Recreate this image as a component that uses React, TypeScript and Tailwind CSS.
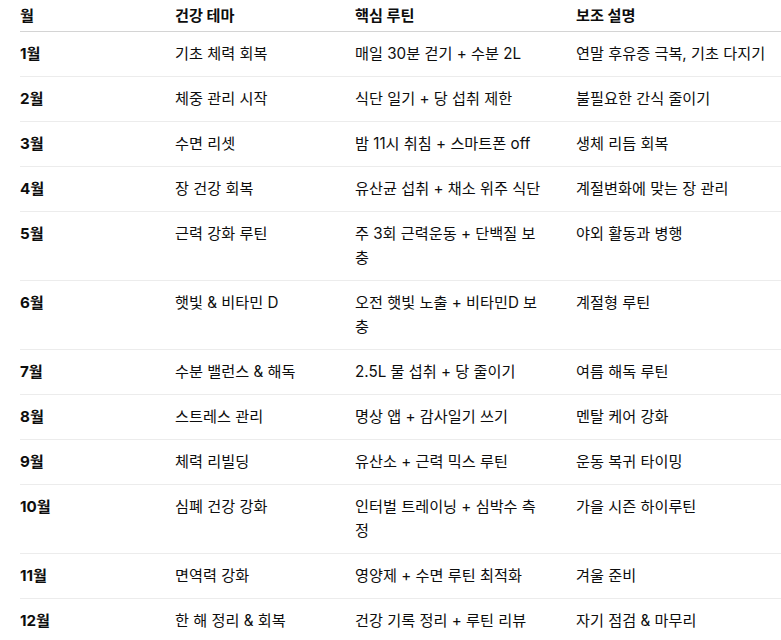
import React from 'react';

interface PlanRow {
  month: string;
  theme: string;
  routine: string;
  note: string;
}

const rows: PlanRow[] = [
  { month: '1월', theme: '기초 체력 회복', routine: '매일 30분 걷기 + 수분 2L', note: '연말 후유증 극복, 기초 다지기' },
  { month: '2월', theme: '체중 관리 시작', routine: '식단 일기 + 당 섭취 제한', note: '불필요한 간식 줄이기' },
  { month: '3월', theme: '수면 리셋', routine: '밤 11시 취침 + 스마트폰 off', note: '생체 리듬 회복' },
  { month: '4월', theme: '장 건강 회복', routine: '유산균 섭취 + 채소 위주 식단', note: '계절변화에 맞는 장 관리' },
  { month: '5월', theme: '근력 강화 루틴', routine: '주 3회 근력운동 + 단백질 보충', note: '야외 활동과 병행' },
  { month: '6월', theme: '햇빛 & 비타민 D', routine: '오전 햇빛 노출 + 비타민D 보충', note: '계절형 루틴' },
  { month: '7월', theme: '수분 밸런스 & 해독', routine: '2.5L 물 섭취 + 당 줄이기', note: '여름 해독 루틴' },
  { month: '8월', theme: '스트레스 관리', routine: '명상 앱 + 감사일기 쓰기', note: '멘탈 케어 강화' },
  { month: '9월', theme: '체력 리빌딩', routine: '유산소 + 근력 믹스 루틴', note: '운동 복귀 타이밍' },
  { month: '10월', theme: '심폐 건강 강화', routine: '인터벌 트레이닝 + 심박수 측정', note: '가을 시즌 하이루틴' },
  { month: '11월', theme: '면역력 강화', routine: '영양제 + 수면 루틴 최적화', note: '겨울 준비' },
  { month: '12월', theme: '한 해 정리 & 회복', routine: '건강 기록 정리 + 루틴 리뷰', note: '자기 점검 & 마무리' },
];

// column widths taken from the screenshot: 월 | 건강 테마 | 핵심 루틴 | 보조 설명
const gridCols = 'grid grid-cols-[139px_180px_221px_1fr]';

export default function App() {
  return (
    <div
      className="min-h-screen w-full bg-white pl-5 text-[15.2px] leading-6 text-[#0d0d0d]"
      style={{ fontFamily: 'Inter, "Noto Sans CJK KR", sans-serif' }}
    >
      <div className={`${gridCols} border-b border-[#d4d4d4] pt-1 pb-[3px] font-bold`}>
        <div className="pr-4">월</div>
        <div className="px-4">건강 테마</div>
        <div className="px-4">핵심 루틴</div>
        <div className="pl-4">보조 설명</div>
      </div>
      {rows.map((row) => (
        <div key={row.month} className={`${gridCols} border-b border-[#ececec] py-2.5`}>
          <div className="pr-4 font-bold">{row.month}</div>
          <div className="px-4">{row.theme}</div>
          <div className="pl-4 pr-[18px] break-all">{row.routine}</div>
          <div className="pl-4">{row.note}</div>
        </div>
      ))}
    </div>
  );
}
